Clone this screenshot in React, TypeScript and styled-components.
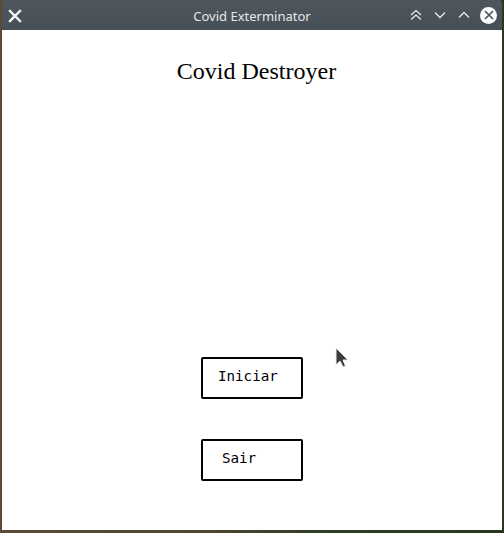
import React from 'react'
import styled, { createGlobalStyle } from 'styled-components'

const GlobalStyle = createGlobalStyle`
    html, body {
        margin: 0;
        padding: 0;
    }
    body {
        width: 504px;
        height: 533px;
        overflow: hidden;
    }
`

const TitleIcon = ({ kind }: { kind: 'shade' | 'min' | 'max' }) => {
    const paths = {
        shade: 'M1 6 L6 1.5 L11 6 M1 10.5 L6 6 L11 10.5',
        min: 'M1 3.5 L6 8.5 L11 3.5',
        max: 'M1 8.5 L6 3.5 L11 8.5',
    }
    return (
        <svg width="12" height="12" viewBox="0 0 12 12">
            <path d={paths[kind]} fill="none" stroke="#e8eaec" strokeWidth="1.3" />
        </svg>
    )
}

export default function App() {
    return (
        <Desktop>
            <GlobalStyle />
            <Window>
                <TitleBar>
                    <LeftIcon>
                        <svg width="14" height="14" viewBox="0 0 14 14">
                            <path d="M2 2 L12 12 M12 2 L2 12" stroke="#f4f5f6" strokeWidth="2.4" strokeLinecap="square" />
                        </svg>
                    </LeftIcon>
                    <WindowTitle>Covid Exterminator</WindowTitle>
                    <Controls>
                        <TitleIcon kind="shade" />
                        <TitleIcon kind="min" />
                        <TitleIcon kind="max" />
                        <CloseButton>
                            <svg width="10" height="10" viewBox="0 0 10 10">
                                <path d="M1 1 L9 9 M9 1 L1 9" stroke="#474f57" strokeWidth="1.6" />
                            </svg>
                        </CloseButton>
                    </Controls>
                </TitleBar>
                <Content>
                    <Heading>Covid Destroyer</Heading>
                    <Menu>
                        <MenuButton $indent={15}>Iniciar</MenuButton>
                        <MenuButton $indent={19}>Sair</MenuButton>
                    </Menu>
                    <Pointer>
                        <svg width="14" height="22" viewBox="0 0 14 22">
                            <path d="M1 1 L1 18 L5 14 L8 20 L10.5 19 L8 13 L13 13 Z" fill="#3a3d40" stroke="#f0f0f0" strokeWidth="1" />
                        </svg>
                    </Pointer>
                </Content>
            </Window>
        </Desktop>
    )
}

const Desktop = styled.div`
    width: 504px;
    height: 533px;
    box-sizing: border-box;
    padding: 0 2px 3px 2px;
    background: linear-gradient(90deg, #5b4b36 0%, #4f4632 40%, #2d3d22 65%, #2a3620 100%);
`

const Window = styled.div`
    height: 100%;
    display: flex;
    flex-direction: column;
    border-radius: 3px 3px 0 0;
    overflow: hidden;
`

const TitleBar = styled.div`
    height: 30px;
    flex-shrink: 0;
    display: grid;
    grid-template-columns: 1fr auto 1fr;
    align-items: center;
    background: linear-gradient(180deg, #4e565d 0%, #475057 100%);
    font-family: "Noto Sans", sans-serif;
`

const LeftIcon = styled.div`
    width: 14px;
    height: 14px;
    margin-left: 6px;
    margin-top: 1px;
    display: flex;
`

const WindowTitle = styled.div`
    font-size: 13px;
    color: #e6e8ea;
    padding-top: 1px;
`

const Controls = styled.div`
    justify-self: end;
    display: flex;
    align-items: center;
    gap: 12px;
    margin-right: 5px;
`

const CloseButton = styled.div`
    width: 17px;
    height: 17px;
    border-radius: 50%;
    background: #fafafa;
    display: flex;
    align-items: center;
    justify-content: center;
    margin-left: -2px;
`

const Content = styled.div`
    flex: 1;
    background: #ffffff;
    display: flex;
    flex-direction: column;
    align-items: center;
    position: relative;
`

const Heading = styled.h1`
    margin: 27px 0 0 0;
    padding-left: 9px;
    font-family: "Liberation Serif", serif;
    font-weight: 400;
    font-size: 24px;
    line-height: 28px;
    color: #000000;
`

const Menu = styled.div`
    margin-top: 272px;
    display: flex;
    flex-direction: column;
    gap: 40px;
`

const MenuButton = styled.div<{ $indent: number }>`
    width: 102px;
    height: 42px;
    box-sizing: border-box;
    border: 2px solid #000000;
    border-radius: 2px;
    display: flex;
    align-items: center;
    padding-left: ${p => p.$indent}px;
    padding-bottom: 4px;
    font-family: "DejaVu Sans Mono", monospace;
    font-size: 14.2px;
    color: #000000;
`

const Pointer = styled.div`
    position: absolute;
    left: 333px;
    top: 317px;
`
